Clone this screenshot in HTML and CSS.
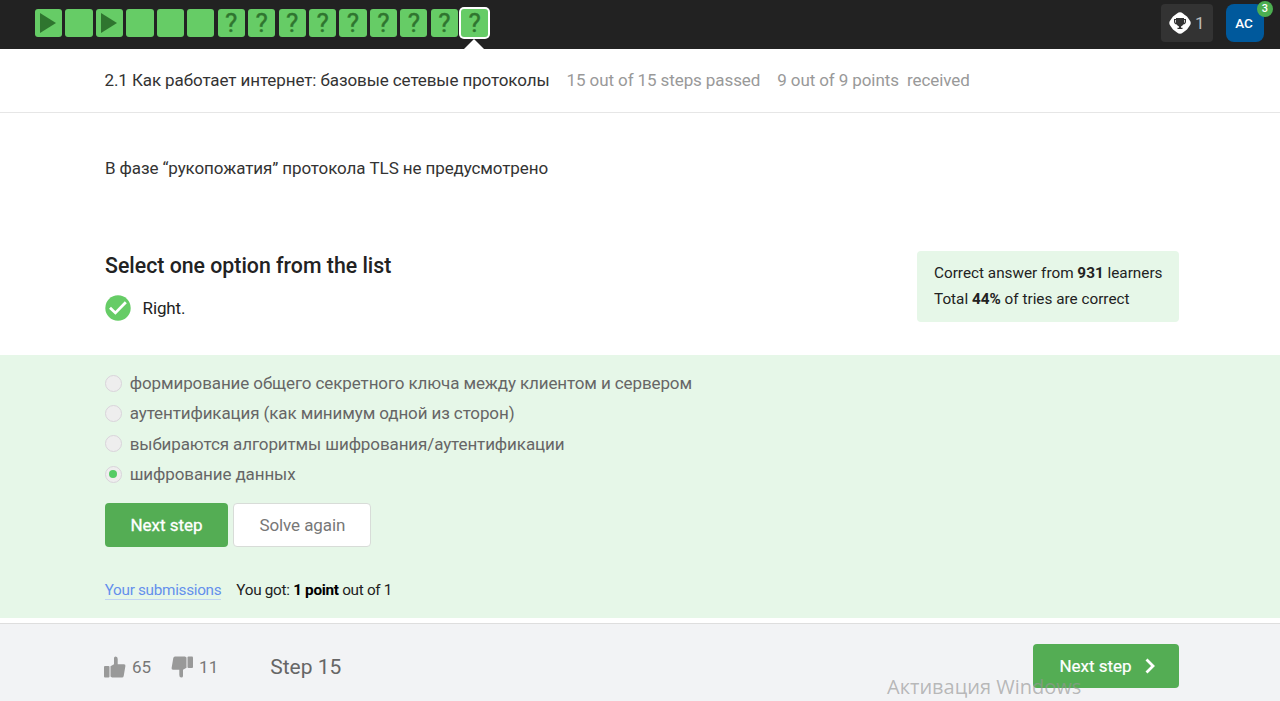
FILE: index.html
```html
<!DOCTYPE html>
<html lang="ru">
<head>
<meta charset="utf-8">
<title>2.1 Как работает интернет: базовые сетевые протоколы</title>
<link rel="stylesheet" href="styles.css">
</head>
<body>
<header class="topbar">
  <nav class="steps">
    <span class="step"><svg class="play" viewBox="0 0 16 20"><path d="M0 0L16 10L0 20Z"/></svg></span>
    <span class="step"></span>
    <span class="step"><svg class="play" viewBox="0 0 16 20"><path d="M0 0L16 10L0 20Z"/></svg></span>
    <span class="step"></span>
    <span class="step"></span>
    <span class="step"></span>
    <span class="step">?</span>
    <span class="step">?</span>
    <span class="step">?</span>
    <span class="step">?</span>
    <span class="step">?</span>
    <span class="step">?</span>
    <span class="step">?</span>
    <span class="step">?</span>
    <span class="step current">?</span>
  </nav>
  <div class="user">
    <div class="awards">
      <svg class="trophy" viewBox="0 0 22 22"><path fill="#fff" d="M8 1.5Q11 -1 14 1.5L15.5 2.7L18 4.5L20.5 8Q23 11 20.5 14L18 17.5L14 20.5Q11 23 8 20.5L4 17.5L1.5 14Q-1 11 1.5 8L4 4.5Z"/><path fill="#333" d="M7 6h8v1h2v2.500q0 2.500-2.800 3q-.8 1.500-2.200 2v1.200h1.500v1.300h-5v-1.300h1.500v-1.200q-1.400-.5-2.200-2q-2.800-.5-2.800-3v-2.500h2z"/><path d="M6 8h1v3q-1-.3-1-1.500zM16 8h-1v3q1-.3 1-1.500z" fill="#ccc"/></svg>
      <span>1</span>
    </div>
    <div class="avatar">AC<span class="badge">3</span></div>
  </div>
</header>
<section class="lesson">
  <span class="lesson-title">2.1 Как работает интернет: базовые сетевые протоколы</span>
  <span class="passed">15 out of 15 steps passed</span>
  <span class="points">9 out of 9 points&nbsp; received</span>
</section>
<main>
  <p class="question">В фазе “рукопожатия” протокола TLS не предусмотрено</p>
  <div class="task">
    <div>
      <h2>Select one option from the list</h2>
      <div class="result">
        <svg class="check" viewBox="0 0 26 26"><circle cx="13" cy="13" r="12.700" fill="#66cc66"/><path d="M5 12.700L10.400 17.900L20.800 7.300" fill="none" stroke="#fff" stroke-width="2.800"/></svg>
        <span>Right.</span>
      </div>
    </div>
    <div class="stats">
      <div>Correct answer from <b>931</b> learners</div>
      <div>Total <b>44%</b> of tries are correct</div>
    </div>
  </div>
  <section class="answer">
    <ul class="options">
      <li><i class="radio"></i><span>формирование общего секретного ключа между клиентом и сервером</span></li>
      <li><i class="radio"></i><span>аутентификация (как минимум одной из сторон)</span></li>
      <li><i class="radio"></i><span>выбираются алгоритмы шифрования/аутентификации</span></li>
      <li><i class="radio checked"></i><span>шифрование данных</span></li>
    </ul>
    <div class="buttons">
      <button class="btn next">Next step</button>
      <button class="btn again">Solve again</button>
    </div>
    <div class="submissions">
      <a class="link">Your submissions</a>
      <span>You got: <b>1 point</b> out of 1</span>
    </div>
  </section>
</main>
<footer class="footer">
  <div class="vote up"><svg viewBox="0 0 22 22"><rect x="0" y="10" width="5.500" height="11.500" rx="1"/><path d="M6.500 10.200L10 8.200V2Q10 .5 11.700 .5Q13.700 .5 13.700 3V8.200H20Q21.700 8.200 21.400 10L19.700 20Q19.400 21.500 18 21.500H8L6.500 20.500Z"/></svg><span>65</span></div>
  <div class="vote down"><svg viewBox="0 0 22 22"><rect x="16.500" y=".5" width="5.500" height="11.500" rx="1"/><path d="M15.500 11.800L12 13.800V20Q12 21.500 10.300 21.500Q8.300 21.500 8.300 19V13.800H2Q.3 13.800 .6 12L2.300 2Q2.600 .5 4 .5H14L15.500 1.500Z"/></svg><span>11</span></div>
  <span class="step-name">Step 15</span>
  <button class="btn forward">Next step<svg viewBox="0 0 10 16"><path d="M1.500 1.500L8 8L1.500 14.500"/></svg></button>
</footer>
<div class="watermark">Активация Windows</div>
</body>
</html>
```
FILE: styles.css
```css
* { box-sizing: border-box; }
body { margin: 0; height: 701px; overflow: hidden; background: #fff; color: #222; font-family: Roboto, "Liberation Sans", sans-serif; font-size: 17px; white-space: nowrap; display: flex; flex-direction: column; }
.topbar { height: 49px; flex: none; background: #222; display: flex; justify-content: space-between; padding: 0 16px 0 35px; }
.steps { display: flex; gap: 3.25px; padding-top: 9px; }
.step { width: 27.2px; height: 28px; border-radius: 3px; background: #66cc66; color: #2f752f; display: flex; align-items: center; justify-content: center; font-size: 26px; font-weight: 400; -webkit-text-stroke: .4px #2f752f; line-height: 28px; position: relative; }
.play { width: 16px; height: 20px; fill: #2f752f; margin-right: 1px; }
.current { box-shadow: 0 0 0 2px #fff; }
.current::after { content: ""; position: absolute; top: 30px; left: 3px; border: 10px solid transparent; border-top: 0; border-bottom-color: #fff; }
.user { display: flex; gap: 13px; padding-top: 4px; }
.awards { width: 52px; height: 38px; border-radius: 4px; background: #333; color: #bbb; display: flex; align-items: center; padding-left: 8px; gap: 4px; }
.trophy { width: 22px; height: 22px; }
.avatar { width: 38px; height: 38px; border-radius: 8px; background: #00599c; color: #fff; font-size: 13.5px; font-weight: 500; display: flex; align-items: center; justify-content: center; padding-right: 2px; position: relative; }
.badge { position: absolute; left: 31px; top: -3px; width: 16px; height: 16px; border-radius: 50%; background: #4caf50; font-size: 11px; line-height: 16px; text-align: center; }
.lesson { height: 64px; flex: none; border-bottom: 1px solid #e6e6e6; display: flex; align-items: center; padding: 0 0 2px 104.5px; color: #999; gap: 17px; letter-spacing: -.1px; }
.lesson-title { color: #333; }
main { flex: none; }
.question { margin: 0; padding: 45px 0 0 105px; line-height: 20px; color: #333; letter-spacing: -.1px; }
.task { display: flex; justify-content: space-between; padding: 73px 101.5px 0 105px; height: 177px; }
h2 { margin: 0; padding-top: 3px; font-size: 21.3px; line-height: 24px; font-weight: 500; }
.result { display: flex; align-items: center; gap: 12px; margin: 17px 0 0 -.5px; height: 26px; letter-spacing: -.1px; }
.check { width: 26px; height: 26px; }
.stats { width: 261.5px; height: 70.5px; border-radius: 4px; background: #e6f7e8; padding: 10px 17px; font-size: 15.3px; line-height: 25.5px; }
.answer { height: 263px; background: #e6f7e8; padding: 13px 0 0 104.7px; }
.options { list-style: none; margin: 0; padding: 0; color: #666; letter-spacing: -.11px; }
.options li { height: 30.3px; display: flex; align-items: center; gap: 8px; }
.radio { width: 17px; height: 17px; border-radius: 50%; background: #eee; border: 1px solid #d9d4da; display: flex; align-items: center; justify-content: center; }
.checked::after { content: ""; width: 8px; height: 8px; border-radius: 50%; background: #5c6; }
.buttons { display: flex; gap: 5px; margin-top: 14px; }
.btn { font: 500 17px Roboto, sans-serif; height: 44px; border: 0; border-radius: 4px; background: #54ad54; color: #fff; padding: 0; letter-spacing: -.08px; }
.next { width: 123.7px; font-weight: 400; letter-spacing: 0; -webkit-text-stroke: .3px #fff; }
.again { width: 138px; background: #fff; border: 1px solid #d8dcd8; color: #777; font-weight: 400; }
.submissions { display: flex; gap: 15px; margin-top: 34px; font-size: 15.3px; line-height: 18px; letter-spacing: -.3px; }
.link { color: #6490ec; border-bottom: 1px solid #c2d5f2; }
.submissions b { color: #000; }
.footer { height: 78px; flex: none; margin-top: 5px; background: #f2f3f5; border-top: 1px solid #dedede; display: flex; align-items: center; padding: 7px 101px 0 104px; color: #777; }
.vote { display: flex; align-items: center; gap: 6px; padding-top: 1px; }
.vote svg { width: 22px; height: 22px; fill: #999; }
.down { margin-left: 20px; }
.down svg { margin-top: 1px; }
.step-name { font-size: 21px; color: #666; margin-left: 52px; padding-top: 1px; }
.forward { width: 146px; margin-left: auto; display: flex; align-items: center; justify-content: center; gap: 13px; padding-left: 2px; font-weight: 400; letter-spacing: 0; -webkit-text-stroke: .2px #fff; }
.forward svg { width: 10px; height: 16px; fill: none; stroke: #fff; stroke-width: 2.800; }
.watermark { position: absolute; left: 887px; top: 673px; font: 20px/28px "Open Sans", sans-serif; color: rgba(150, 150, 150, .65); }
```
